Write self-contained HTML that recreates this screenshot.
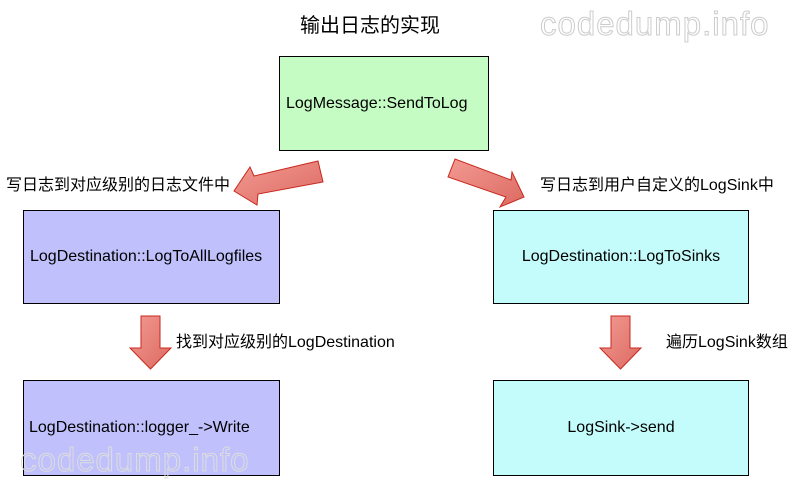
<!DOCTYPE html>
<html><head><meta charset="utf-8"><style>
body{margin:0;width:795px;height:477px;background:#fff;position:relative;overflow:hidden;font-family:"Liberation Sans","Noto Sans CJK SC",sans-serif;}
.b{position:absolute;border:1px solid #000;box-sizing:border-box;display:flex;align-items:center;justify-content:center;font-size:16px;color:#000;}
.t{position:absolute;font-size:16px;color:#000;white-space:nowrap;}
.wm{position:absolute;font-family:"Liberation Sans",sans-serif;font-size:33px;color:transparent;-webkit-text-stroke:1px #ccc;letter-spacing:1px;white-space:nowrap;}
</style></head><body>
<div class="t" style="left:300px;top:9px;font-size:20px;">输出日志的实现</div>
<div class="wm" style="left:540px;top:5px;">codedump.info</div>
<div class="b" style="left:279px;top:56px;width:210px;height:95px;background:#c4fcc4;justify-content:flex-start;padding-left:6px;">LogMessage::SendToLog</div>
<div class="b" style="left:23px;top:210px;width:257px;height:94px;background:#c0c0fc;justify-content:flex-start;padding-left:6px;">LogDestination::LogToAllLogfiles</div>
<div class="b" style="left:493px;top:210px;width:256px;height:94px;background:#c4fcfc;">LogDestination::LogToSinks</div>
<div class="b" style="left:23px;top:380px;width:257px;height:96px;background:#c0c0fc;justify-content:flex-start;padding-left:5px;">LogDestination::logger_-&gt;Write</div>
<div class="b" style="left:493px;top:380px;width:256px;height:96px;background:#c4fcfc;">LogSink-&gt;send</div>
<div class="t" style="left:6px;top:171px;">写日志到对应级别的日志文件中</div>
<div class="t" style="left:540px;top:171px;">写日志到用户自定义的LogSink中</div>
<div class="t" style="left:176px;top:328px;">找到对应级别的LogDestination</div>
<div class="t" style="left:666px;top:328px;">遍历LogSink数组</div>
<div class="wm" style="left:20px;top:441px;-webkit-text-stroke:1px #ddd;">codedump.info</div>
<svg width="795" height="477" style="position:absolute;left:0;top:0">
<defs><linearGradient id="g" x1="0" y1="0" x2="1" y2="1"><stop offset="0" stop-color="#f29a92"/><stop offset="1" stop-color="#dc6a62"/></linearGradient></defs>
<g fill="url(#g)" stroke="#c8281e" stroke-width="1">
<polygon points="318,161 323,182 258,194 257,205 234,191 250,167 254,176"/>
<polygon points="455,159 448,177 506,197 500,207 524,197 512,172 511,180"/>
<polygon points="141,316 160,316 160,348 171,348 150.5,369 130,348 141,348"/>
<polygon points="611,316 630,316 630,348 641,348 620.5,369 600,348 611,348"/>
</g></svg>
</body></html>
